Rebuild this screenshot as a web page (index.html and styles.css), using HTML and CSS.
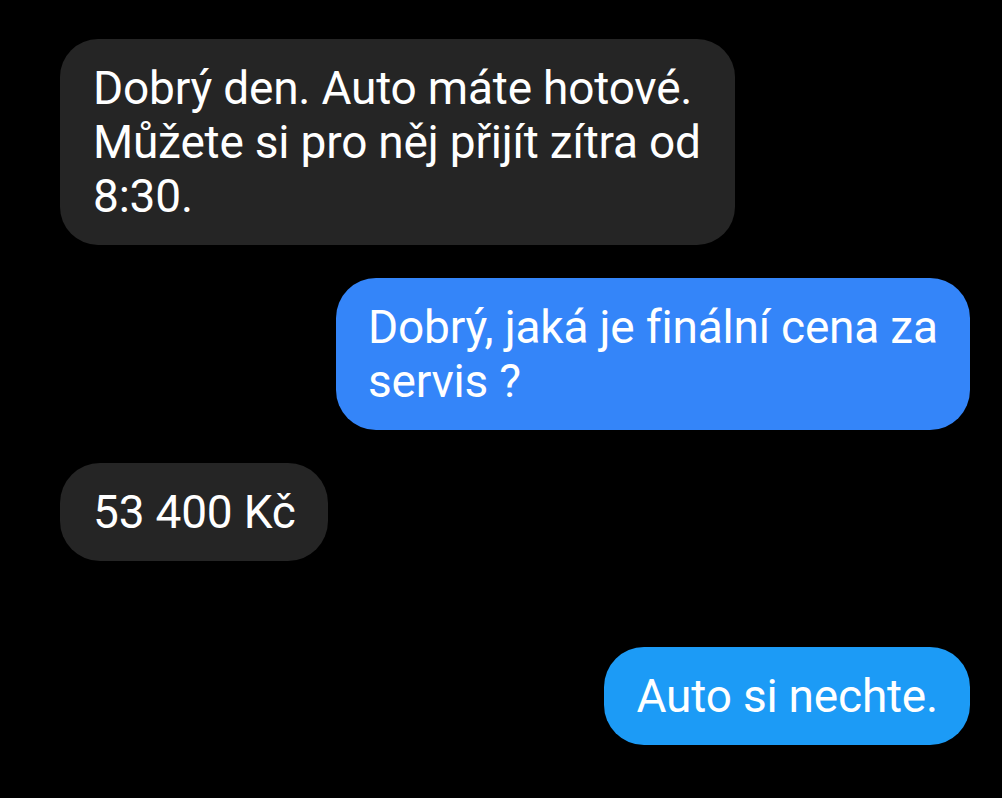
FILE: index.html
```html
<!DOCTYPE html>
<html lang="cs">
<head>
<meta charset="utf-8">
<link rel="stylesheet" href="styles.css">
</head>
<body>
<main class="chat">
  <div class="msg in wide">Dobrý den. Auto máte hotové. Můžete si pro něj přijít zítra od 8:30.</div>
  <div class="msg out out-a">Dobrý, jaká je finální cena za servis ?</div>
  <div class="msg in">53 400 Kč</div>
  <div class="msg out out-b last">Auto si nechte.</div>
</main>
</body>
</html>
```
FILE: styles.css
```css
html, body {
  margin: 0;
  background: #000;
}
.chat {
  width: 1002px;
  height: 798px;
  box-sizing: border-box;
  padding: 39px 32px 0 60px;
  display: flex;
  flex-direction: column;
  gap: 33px;
  font-family: Roboto, "Noto Sans", sans-serif;
  font-size: 46px;
  line-height: 54px;
  letter-spacing: -0.2px;
  color: #fff;
}
.msg {
  box-sizing: border-box;
  padding: 22px 32px 22px 33px;
  border-radius: 40px;
  width: fit-content;
}
.in {
  align-self: flex-start;
  background: #252525;
}
.wide {
  max-width: 675px;
  border-radius: 38px;
}
.out {
  align-self: flex-end;
}
.out-a {
  max-width: 634px;
  padding-left: 32px;
  padding-right: 22px;
  background: #3485f9;
}
.out-b { background: #1c9bf6; }
.last { margin-top: 53px; }
```
